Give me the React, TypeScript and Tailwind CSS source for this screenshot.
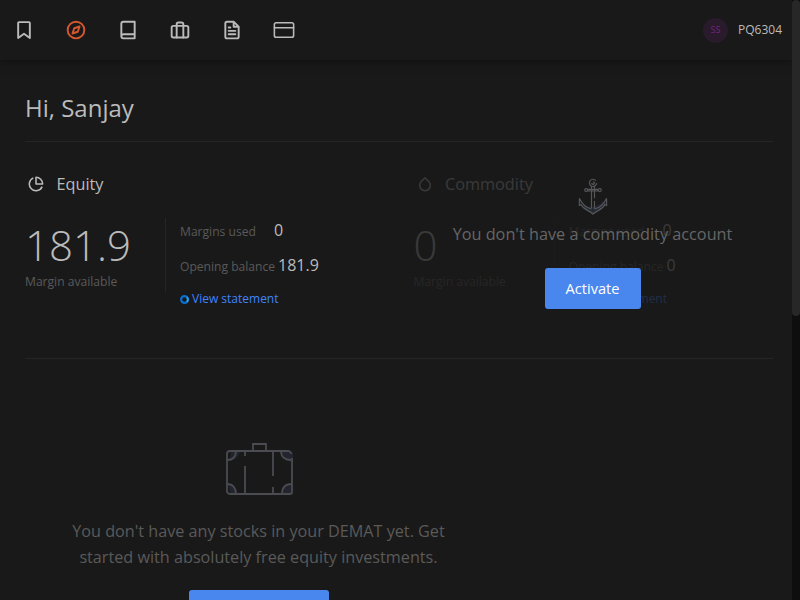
import type { ReactNode } from 'react';

function NavIcon({ children, active = false, size = 20, stroke = 2.3 }: { children: ReactNode; active?: boolean; size?: number; stroke?: number }) {
  return (
    <a className={`flex h-[60px] w-[52px] items-center justify-center ${active ? 'text-[#d5572f]' : 'text-[#bbbbbb]'}`}>
      <svg width={size} height={size} viewBox="0 0 24 24" fill="none" stroke="currentColor" strokeWidth={stroke} strokeLinecap="round" strokeLinejoin="round">
        {children}
      </svg>
    </a>
  );
}

function Ring() {
  return (
    <svg className="mr-[3px]" width="9" height="9" viewBox="0 0 9 9" fill="none" strokeWidth="2.2">
      <circle cx="4.5" cy="4.5" r="3.4" stroke="#0a6fd0" />
      <path d="M6.9 2.1a3.4 3.4 0 0 1 0 4.8" stroke="#2ba3e8" strokeWidth="1.8" />
    </svg>
  );
}

function Funds({ title, amount, used, opening, icon }: { title: string; amount: string; used: string; opening: string; icon: ReactNode }) {
  return (
    <div>
      <div className="flex h-6 items-center text-[16.25px] text-[#bbbbbb]">
        <svg className="ml-[3px] mr-[12.5px]" width="16" height="16" viewBox="0 0 24 24" fill="none" stroke="currentColor" strokeWidth="2.3" strokeLinejoin="round">{icon}</svg>
        {title}
      </div>
      <div className="mt-[21px] flex">
        <div className="relative h-[75px] w-[141px]">
          <div className="h-[56px] text-[42px] font-light leading-[55px] text-[#bbbbbb]">{amount}</div>
          <div className="h-[18px] text-[12.1px] leading-[18px] text-[#5a5a5a]">Margin available</div>
          <div className="absolute right-0 top-px h-[74px] w-px bg-[#252525]" />
        </div>
        <div className="pl-[14px] pt-px text-[12.1px] text-[#5a5a5a]">
          <div className="flex h-6 items-baseline leading-6">
            <span className="w-[94px]">Margins used</span>
            <span className="text-[16px] text-[#bbbbbb]">{used}</span>
          </div>
          <div className="mt-[11px] flex h-6 items-baseline leading-6">
            <span className="w-[98px]">Opening balance</span>
            <span className="text-[16px] text-[#bbbbbb]">{opening}</span>
          </div>
          <div className="mt-[13px] flex h-[18px] items-center text-[12px] text-[#3f83ff]">
            <Ring />
            View statement
          </div>
        </div>
      </div>
    </div>
  );
}

function Anchor() {
  return (
    <svg width="30" height="38" viewBox="0 0 30 38" fill="none" stroke="#55565a" strokeWidth="1.2" strokeLinejoin="round">
      <path d="M7 27c3 3 12 3 18-4l3 3c-3 6-7 6-13 10-4-3-7-3-10-7z" fill="#242833" stroke="none" />
      <path d="M15 3.800a1.300 1.300 0 1 1-1.300 1.300M17.800 2.600a3.600 3.600 0 1 0 .8 2.400M13.500 8.300v22M16.500 8.300v12M16.500 23v8" />
      <path d="M9.500 11.300h11M9.500 12.900h11" />
      <circle cx="8.200" cy="12.100" r="1.500" />
      <circle cx="21.800" cy="12.100" r="1.500" />
      <path d="M13.500 31C8 30 4 26 1.500 20.500L1.300 27.500l1.700-1c3 6 8 5.500 12 9.500 4-4 9-3.500 12-9.500l1.700 1-.2-7C26 26 22 30 16.500 31" />
    </svg>
  );
}

function Suitcase() {
  return (
    <svg width="70" height="54" viewBox="0 0 70 54" fill="none" stroke="#4b4c51" strokeWidth="1.8">
      <path d="M6 8h9c-1 5-4 9-10 9zM56 9h12v10c-7 0-11-4-12-10zM3 42c6 0 9 4 9 10H6zM67 42c-6 0-9 4-9 10h8z" fill="#22252e" stroke="none" />
      <path d="M66 11v-1M67 15v34a2 2 0 0 1-2 2H5a3 3 0 0 1-3-3V11a3 3 0 0 1 3-3h58a3 3 0 0 1 3 2M28 7V1h13v6" />
      <path d="M2 17c6 0 9-3 9-9M56 8c0 6 4 9 10 9M2 41c6 0 9 4 9 10M67 41c-7 0-10 4-10 10M20 8v5M20 23v28M48 8v25M48 44v7" />
    </svg>
  );
}

export default function App() {
  return (
    <div className="flex h-[600px] w-[800px] overflow-hidden bg-[#191919] font-['Open_Sans','Noto_Sans',sans-serif]">
      <div className="w-[792px] overflow-hidden">
        <header className="flex h-[60px] items-center justify-between bg-[#191919] pr-[10px] shadow-[0_0_10px_rgba(0,0,0,0.5)]">
          <nav className="-ml-[2px] flex">
            <NavIcon><path d="M19 21.500l-7-5-7 5V3.500a1 1 0 0 1 1-1h12a1 1 0 0 1 1 1z" /></NavIcon>
            <NavIcon active><circle cx="12" cy="12" r="10" /><path d="M16.240 7.760l-2.120 6.360-6.360 2.120 2.120-6.360z" /></NavIcon>
            <NavIcon><path d="M4 19.500A2.500 2.500 0 0 1 6.500 17H20M6.500 2H20v20H6.500A2.500 2.500 0 0 1 4 19.500v-15A2.500 2.500 0 0 1 6.500 2z" /></NavIcon>
            <NavIcon><rect x="2" y="7" width="20" height="14" rx="2" /><path d="M16 21V5a2 2 0 0 0-2-2h-4a2 2 0 0 0-2 2v16" /></NavIcon>
            <NavIcon><path d="M14 2H6a2 2 0 0 0-2 2v16a2 2 0 0 0 2 2h12a2 2 0 0 0 2-2V8zM14 2v6h6M16 13H8M16 17H8M10 9H8" /></NavIcon>
            <NavIcon size={22} stroke={1.7}><rect x="1.500" y="4" width="21" height="16" rx="2" /><path d="M1.500 9.500h21" /></NavIcon>
          </nav>
          <div className="flex items-center gap-[10px] text-[12px] text-[#bbbbbb]">
            <span className="flex size-[25px] items-center justify-center rounded-full bg-[#291a2c] text-[9px] text-[#73247f]">SS</span>
            PQ6304
          </div>
        </header>
        <main className="px-[25px]">
          <div className="w-[748px]">
            <h1 className="border-b border-[#252525] pb-[16px] pt-[30px] text-[24px] leading-[35px] text-[#bbbbbb]">Hi, Sanjay</h1>
            <section className="grid h-[217px] grid-cols-2 gap-x-[30px] border-b border-[#252525] pt-[30px]">
              <Funds title="Equity" amount="181.9" used="0" opening="181.9" icon={<><path d="M21.210 15.890A10 10 0 1 1 8 2.830" /><path d="M22 12A10 10 0 0 0 12 2v10z" /></>} />
              <div className="relative">
                <div className="-ml-[0.5px] opacity-20">
                  <Funds title="Commodity" amount="0" used="0" opening="0" icon={<path d="M12 2.700l5.660 5.660a8 8 0 1 1-11.310 0z" />} />
                </div>
                <div className="absolute right-[2px] left-0 top-[6px] flex flex-col items-center">
                  <Anchor />
                  <p className="mt-[6px] whitespace-nowrap text-[16.25px] leading-[24px] text-[#666666]">You don't have a commodity account</p>
                  <button className="mt-[22px] h-[41px] w-[96px] rounded-[3px] bg-[#4987ee] text-[14.6px] text-white">Activate</button>
                </div>
              </div>
            </section>
            <section className="flex w-[467px] flex-col items-center pt-[84px]">
              <div className="pl-[2px]"><Suitcase /></div>
              <p className="mt-[21px] text-center text-[16.2px] leading-[26px] text-[#5a5a5a]">You don't have any stocks in your DEMAT yet. Get<br />started with absolutely free equity investments.</p>
              <button className="mt-[20px] h-[41px] w-[140px] rounded-[3px] bg-[#4987ee] text-[14px] text-white" aria-hidden="true" />
            </section>
          </div>
        </main>
      </div>
      <div className="h-[600px] w-[8px] bg-[#0e0e0e]">
        <div className="h-[316px] rounded-[4px] bg-[#272727]" />
      </div>
    </div>
  );
}
